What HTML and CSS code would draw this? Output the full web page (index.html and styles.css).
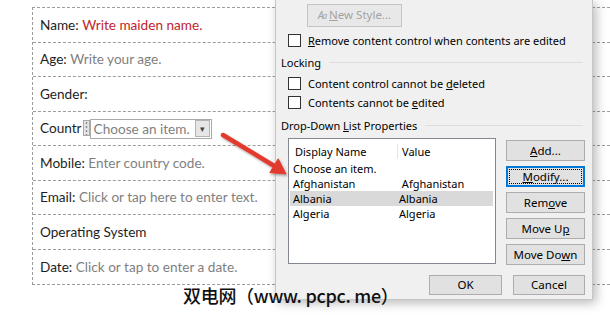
FILE: index.html
```html
<!DOCTYPE html>
<html lang="en">
<head>
    <meta charset="UTF-8">
    <title>Content Control Properties</title>
    <link rel="stylesheet" href="styles.css">
</head>
<body>
<div class="page">
    <!-- Form table in the document -->
    <div class="form-table">
        <div class="row"><span class="label">Name:</span>&nbsp;<span class="hint red">Write maiden name.</span></div>
        <div class="row"><span class="label">Age:</span>&nbsp;<span class="hint">Write your age.</span></div>
        <div class="row"><span class="label">Gender:</span></div>
        <div class="row">
            <span class="label">Countr</span>
            <span class="cc-grip"></span>
            <span class="cc-box">
                <span class="hint">Choose an item.</span>
                <span class="cc-drop">&#9662;</span>
            </span>
        </div>
        <div class="row"><span class="label">Mobile:</span>&nbsp;<span class="hint">Enter country code.</span></div>
        <div class="row"><span class="label">Email:</span>&nbsp;<span class="hint">Click or tap here to enter text.</span></div>
        <div class="row"><span class="label">Operating System</span></div>
        <div class="row"><span class="label">Date:</span>&nbsp;<span class="hint">Click or tap to enter a date.</span></div>
    </div>

    <!-- Content Control Properties dialog -->
    <div class="dialog">
        <div class="style-row">
            <button class="btn btn-disabled new-style"><span class="style-icon">A<small>a</small></span><u>N</u>ew Style...</button>
        </div>
        <label class="check-row first-check"><span class="checkbox"></span><span><u>R</u>emove content control when contents are edited</span></label>

        <div class="group-title"><span>Locking</span></div>
        <label class="check-row"><span class="checkbox"></span><span>Content control cannot be <u>d</u>eleted</span></label>
        <label class="check-row tight"><span class="checkbox"></span><span>Contents cannot be <u>e</u>dited</span></label>

        <div class="group-title list-title"><span>Drop-Down <u>L</u>ist Properties</span></div>
        <div class="list-area">
            <div class="listbox">
                <div class="list-head">
                    <span class="col-name">Display Name</span>
                    <span class="col-value">Value</span>
                </div>
                <div class="list-row"><span class="col-name">Choose an item.</span><span class="col-value"></span></div>
                <div class="list-row"><span class="col-name">Afghanistan</span><span class="col-value">&nbsp;Afghanistan</span></div>
                <div class="list-row selected"><span class="col-name">Albania</span><span class="col-value">Albania</span></div>
                <div class="list-row"><span class="col-name">Algeria</span><span class="col-value">Algeria</span></div>
            </div>
            <div class="side-buttons">
                <button class="btn"><u>A</u>dd...</button>
                <button class="btn btn-focus"><u>M</u>odify...</button>
                <button class="btn">Rem<u>o</u>ve</button>
                <button class="btn">Move U<u>p</u></button>
                <button class="btn">Move Do<u>w</u>n</button>
            </div>
        </div>

        <div class="footer">
            <button class="btn btn-ok">OK</button>
            <button class="btn btn-cancel">Cancel</button>
        </div>
    </div>

    <!-- Red callout arrow -->
    <svg class="arrow" viewBox="0 0 80 60" width="80" height="60" xmlns="http://www.w3.org/2000/svg">
        <defs>
            <filter id="shadow" x="-20%" y="-20%" width="140%" height="140%">
                <feDropShadow dx="1" dy="1.5" stdDeviation="1" flood-color="#000" flood-opacity="0.35"/>
            </filter>
        </defs>
        <g filter="url(#shadow)" fill="#e23b2e" stroke="#e23b2e">
            <line x1="8" y1="10" x2="61" y2="42" stroke-width="4.5" stroke-linecap="round"/>
            <polygon points="71,49 54.8,47.6 63.2,33.8" stroke-width="1" stroke-linejoin="round"/>
        </g>
    </svg>

    <div class="watermark">双电网（www. pcpc. me）</div>
</div>
</body>
</html>
```

FILE: styles.css
```css
/* Page canvas */
body {
    margin: 0;
    width: 610px;
    height: 321px;
    overflow: hidden;
    background: #fff;
}

.page {
    position: relative;
    height: 321px;
    box-sizing: border-box;
    padding: 7px 0 0 32px;
    overflow: hidden;
    font-family: Lato, "Open Sans", sans-serif;
}

/* Document form table, runs on under the dialog to the window edge */
.form-table {
    border: 1px dashed #9c9c9c;
    border-right: none;
}

.row {
    display: flex;
    align-items: center;
    height: 34.5px;
    box-sizing: border-box;
    padding-left: 7px;
    border-bottom: 1px dashed #9c9c9c;
    font-size: 13.6px;
    color: #1e1e1e;
    white-space: nowrap;
}

.row:last-child {
    border-bottom: none;
}

.hint {
    color: #7f7f7f;
}

.hint.red {
    color: #c0252b;
}

/* Drop-down content control */
.cc-grip {
    width: 5px;
    height: 14px;
    margin-left: 1px;
    border: 1px solid #a8a8a8;
    background: radial-gradient(circle, #8a8a8a 0.8px, transparent 1.2px) 0 0 / 5px 4px #e4e4e4;
}

.cc-box {
    display: flex;
    align-items: center;
    height: 20px;
    box-sizing: border-box;
    margin-top: 1px;
    padding-left: 3px;
    border: 1px solid #a9a9a9;
    background: #fff;
}

.cc-drop {
    width: 13px;
    height: 15px;
    margin: 0 1px 0 5px;
    border: 1px solid #b4b4b4;
    background: #e6e6e6;
    color: #444;
    font-size: 9px;
    line-height: 15px;
    text-align: center;
}

/* Dialog window */
.dialog {
    position: absolute;
    left: 275px;
    top: 0;
    width: 318px;
    height: 300px;
    box-sizing: border-box;
    padding: 4px 7px 0 5px;
    background: #f0f0f0;
    border: 1px solid #c6c6c6;
    border-top: none;
    box-shadow: 3px 3px 10px rgba(0, 0, 0, 0.28);
    font-family: "Noto Sans", sans-serif;
    font-size: 11px;
    color: #000;
}

.btn {
    display: block;
    height: 20px;
    padding: 0;
    border: 1px solid #adadad;
    background: #e1e1e1;
    font-family: inherit;
    font-size: 11.5px;
    color: #000;
    line-height: 18px;
    text-align: center;
}

.style-row {
    padding-left: 26px;
}

.new-style {
    width: 95px;
    height: 23px;
    border-color: #c4c4c4;
    background: #e8e8e8;
    color: #a3a3a3;
}

.style-icon {
    margin-right: 3px;
    font-style: italic;
    font-size: 10px;
    letter-spacing: -1px;
}

.style-icon small {
    font-size: 8px;
}

/* Checkboxes */
.check-row {
    display: flex;
    align-items: center;
    gap: 7px;
    height: 16px;
    margin-top: 3px;
    padding-left: 7px;
    white-space: nowrap;
}

.check-row.first-check {
    margin-top: 5px;
}

.check-row.tight {
    margin-top: 3px;
}

.checkbox {
    width: 11px;
    height: 11px;
    border: 1px solid #333;
    background: #fff;
}

/* Group titles with rule */
.group-title {
    display: flex;
    align-items: center;
    height: 16px;
    margin-top: 6px;
    margin-bottom: 5px;
    white-space: nowrap;
}

.group-title::after {
    content: "";
    flex: 1;
    height: 1px;
    margin: 1px 2px 0 8px;
    background: #dcdcdc;
}

.group-title.list-title {
    margin-top: 7px;
}

/* List box */
.list-area {
    display: flex;
    gap: 10px;
    margin-top: 5px;
}

.listbox {
    width: 208px;
    height: 126px;
    box-sizing: border-box;
    margin-left: 7px;
    padding: 2px 2px 0 1px;
    border: 1px solid #828790;
    background: #fff;
}

.list-head {
    display: flex;
    height: 20px;
    align-items: center;
}

.list-head .col-name {
    width: 108px;
    box-sizing: border-box;
    padding-left: 5px;
    border-right: 1px solid #e3e3e3;
}

.list-head .col-value {
    padding-left: 4px;
}

.list-row {
    display: flex;
    height: 15px;
    align-items: center;
    padding-left: 3px;
}

.list-row .col-name {
    width: 106px;
}

.list-row.selected {
    background: #d9d9d9;
}

.side-buttons {
    display: flex;
    flex-direction: column;
    gap: 5px;
    padding-top: 2px;
}

.side-buttons .btn {
    width: 79px;
    height: 21px;
}

.btn-focus {
    border-color: #0078d7;
    box-shadow: inset 0 0 0 1px #0078d7;
    outline: 1px dotted #000;
    outline-offset: -4px;
}

/* Bottom buttons */
.footer {
    display: flex;
    justify-content: flex-end;
    gap: 11px;
    margin-top: 10px;
}

.btn-ok {
    width: 73px;
}

.btn-cancel {
    width: 72px;
}

/* Overlays */
.arrow {
    position: absolute;
    left: 215px;
    top: 125px;
}

.watermark {
    position: absolute;
    left: 183px;
    top: 283px;
    font-family: "Noto Sans CJK SC", sans-serif;
    font-size: 18px;
    font-weight: 500;
    line-height: 24px;
    letter-spacing: -0.3px;
    color: #111;
    white-space: nowrap;
}
```
